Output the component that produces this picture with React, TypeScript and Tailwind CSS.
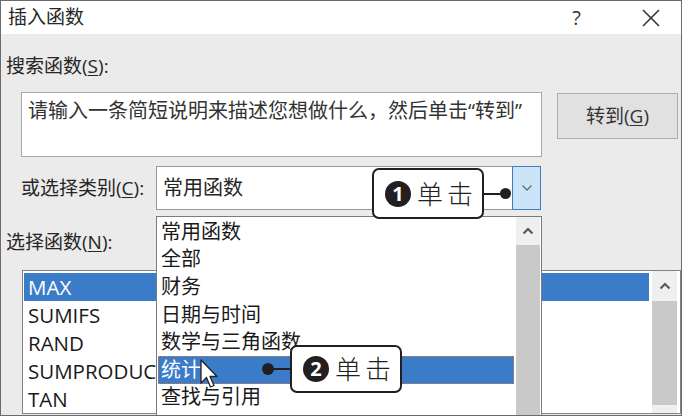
import React from "react";

const categories = [
  "常用函数",
  "全部",
  "财务",
  "日期与时间",
  "数学与三角函数",
  "统计",
  "查找与引用",
];

const functions = ["MAX", "SUMIFS", "RAND", "SUMPRODUCT", "TAN"];

// SMALL SCROLLBAR ARROW
function UpArrow() {
  return (
    <svg width="12" height="8" viewBox="0 0 12 8">
      <polyline
        points="1.5,6.5 6,2 10.5,6.5"
        fill="none"
        stroke="#5a5a5a"
        strokeWidth="2.2"
      />
    </svg>
  );
}

// NUMBERED CALLOUT BOX
function Callout({ num }: { num: string }) {
  return (
    <div
      className="
        flex h-full w-[112px] items-center
        gap-[6px] rounded-[7px]
        border-2 border-[#231f20]
        bg-white pl-[11px]
      "
    >
      <div
        className="
          flex h-[26px] w-[26px] items-center
          justify-center rounded-full
          bg-[#231f20] text-[20px] font-bold
          leading-none text-white
        "
      >
        {num}
      </div>
      <span className="text-[26px] font-light leading-none tracking-[4px] text-[#231f20]">
        单击
      </span>
    </div>
  );
}

export default function App() {
  return (
    <div
      className="
        relative flex h-[416px] w-[682px]
        flex-col overflow-hidden
        border border-[#6b6b6b]
        font-['Open_Sans','Noto_Sans_CJK_SC',sans-serif]
        text-[#262626]
      "
    >
      {/* TITLE BAR */}
      <div className="flex h-[39px] items-center bg-white">
        <span className="ml-[7px] text-[19px] leading-none">插入函数</span>
        <span className="ml-auto text-[20px] leading-none text-[#333]">?</span>
        <svg
          width="20"
          height="18"
          viewBox="0 0 20 18"
          className="ml-[60px] mr-[20px]"
        >
          <line x1="2" y1="1" x2="18" y2="17" stroke="#333" strokeWidth="1.6" />
          <line x1="18" y1="1" x2="2" y2="17" stroke="#333" strokeWidth="1.6" />
        </svg>
      </div>

      {/* BODY */}
      <div className="flex flex-1 flex-col bg-[#ebebeb]">
        <div className="ml-[5px] mt-[20px] text-[19px] leading-[24px]">
          搜索函数(<span className="underline underline-offset-2">S</span>):
        </div>

        {/* SEARCH ROW */}
        <div className="mt-[14px] flex items-start">
          <div
            className="
              ml-[20px] h-[65px] w-[521px]
              border border-[#a8a8a8] bg-white
              pl-[6px] pt-[6px]
              text-[20px] leading-[24px] text-[#333]
            "
          >
            请输入一条简短说明来描述您想做什么，然后单击“转到”
          </div>
          <div
            className="
              ml-[15px] mt-[1px] flex h-[46px] w-[121px]
              items-center justify-center
              border border-[#adadad] bg-[#e1e1e1]
              text-[19px] leading-none text-[#333]
            "
          >
            转到(<span className="underline underline-offset-2">G</span>)
          </div>
        </div>

        {/* CATEGORY ROW */}
        <div className="mt-[9px] flex items-center">
          <div className="ml-[20px] w-[135px] text-[19px] leading-[24px]">
            或选择类别(<span className="underline underline-offset-2">C</span>):
          </div>
          <div
            className="
              flex h-[44px] w-[385px] items-stretch
              border border-[#9a9a9a] bg-white
            "
          >
            <span className="flex flex-1 items-center pl-[6px] text-[20px] leading-none">
              常用函数
            </span>
            <div
              className="
                -my-px -mr-px flex w-[29px] items-center
                justify-center border border-[#3f7fbf]
                bg-[#cce4f7]
              "
            >
              <svg width="12" height="8" viewBox="0 0 12 8">
                <polyline
                  points="1.5,1.5 6,6 10.5,1.5"
                  fill="none"
                  stroke="#6a6a6a"
                  strokeWidth="1.3"
                />
              </svg>
            </div>
          </div>
        </div>

        <div className="ml-[5px] mt-[20px] text-[19px] leading-[24px]">
          选择函数(<span className="underline underline-offset-2">N</span>):
        </div>

        {/* FUNCTION LIST */}
        <div
          className="
            mb-[1px] ml-[21px] mt-[16px] flex w-[659px] flex-1
            border border-[#828282] bg-white
          "
        >
          <div className="flex flex-1 flex-col pl-[1px] pt-[2px]">
            {functions.map((name, index) => (
              <div
                key={name}
                className={
                  index === 0
                    ? "flex h-[28px] w-[625px] items-center bg-[#3b7cc9] pl-[4px] text-[20.5px] leading-none text-white"
                    : "flex h-[28px] w-[625px] items-center pl-[4px] text-[20.5px] leading-none text-[#1a1a1a]"
                }
              >
                {name}
              </div>
            ))}
          </div>
          <div className="mr-[3px] flex w-[25px] flex-col bg-[#efefef]">
            <div className="flex h-[30px] items-center justify-center">
              <UpArrow />
            </div>
            <div className="mb-[8px] flex-1 bg-[#c9c9c9]" />
          </div>
        </div>
      </div>

      {/* CATEGORY DROPDOWN */}
      <div
        className="
          absolute left-[155px] top-[215px] flex
          h-[210px] w-[386px]
          border border-[#7c7c7c] bg-white
        "
      >
        <div className="flex flex-1 flex-col pl-[1px] pt-[1px]">
          {categories.map((name) =>
            name === "统计" ? (
              <div
                key={name}
                className="
                  flex h-[27.6px] items-center
                  border border-dotted border-[#d0784c]
                  bg-[#3b7cc9] pl-[2px]
                  text-[20px] leading-none text-white
                "
              >
                {name}
              </div>
            ) : (
              <div
                key={name}
                className="flex h-[27.6px] items-center pl-[3px] text-[20px] leading-none text-[#1a1a1a]"
              >
                {name}
              </div>
            )
          )}
        </div>
        <div className="ml-[2px] mr-[1px] flex w-[24px] flex-col bg-[#efefef]">
          <div className="flex h-[28px] items-center justify-center">
            <UpArrow />
          </div>
          <div className="flex-1 bg-[#c9c9c9]" />
        </div>
      </div>

      {/* CALLOUT 1 */}
      <div className="absolute left-[371px] top-[167px] flex h-[51px] items-center">
        <Callout num="1" />
        <div className="h-[2px] w-[16px] bg-[#231f20]" />
        <div className="h-[11px] w-[11px] rounded-full bg-[#231f20]" />
      </div>

      {/* MOUSE CURSOR */}
      <svg
        width="20"
        height="31"
        viewBox="0 0 20 31"
        className="absolute left-[199px] top-[358px]"
      >
        <path
          d="M1 1 L1 24 L6.5 18.5 L10.5 28 L14 26.5 L10 17.5 L17 17.5 Z"
          fill="white"
          stroke="#222"
          strokeWidth="1.3"
          strokeLinejoin="round"
        />
      </svg>

      {/* CALLOUT 2 */}
      <div className="absolute left-[261px] top-[344px] flex h-[48px] items-center">
        <div className="h-[12px] w-[12px] rounded-full bg-[#231f20]" />
        <div className="h-[2px] w-[16px] bg-[#231f20]" />
        <Callout num="2" />
      </div>
    </div>
  );
}
